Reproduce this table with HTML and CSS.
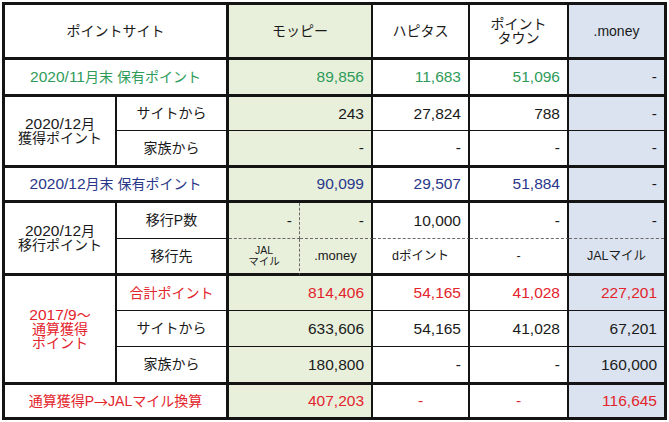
FILE: index.html
```html
<!DOCTYPE html>
<html lang="ja">
<head>
<meta charset="utf-8">
<title>ポイントサイト</title>
<link rel="stylesheet" href="styles.css">
</head>
<body>
<div class="sheet">
  <!-- header -->
  <div class="c s2 tr tb">ポイントサイト</div>
  <div class="c s2 mp tb">モッピー</div>
  <div class="c tb">ハピタス</div>
  <div class="c tb ml">ポイント<br>タウン</div>
  <div class="c tb mo nr">.money</div>

  <!-- 2020/11月末 -->
  <div class="c s2 tr tb g"><span class="d">2020/11</span>月末 保有ポイント</div>
  <div class="c s2 mp tb n g">89,856</div>
  <div class="c tb n g">11,683</div>
  <div class="c tb n g">51,096</div>
  <div class="c tb n mo nr">-</div>

  <!-- 2020/12月 獲得 -->
  <div class="c r2 tb ml"><span><span class="d">2020/12</span>月<br>獲得ポイント</span></div>
  <div class="c tr">サイトから</div>
  <div class="c s2 mp n">243</div>
  <div class="c n">27,824</div>
  <div class="c n">788</div>
  <div class="c n mo nr">-</div>

  <div class="c tr tb">家族から</div>
  <div class="c s2 mp tb n">-</div>
  <div class="c tb n">-</div>
  <div class="c tb n">-</div>
  <div class="c tb n mo nr">-</div>

  <!-- 2020/12月末 -->
  <div class="c s2 tr tb b"><span class="d">2020/12</span>月末 保有ポイント</div>
  <div class="c s2 mp tb n b">90,099</div>
  <div class="c tb n b">29,507</div>
  <div class="c tb n b">51,884</div>
  <div class="c tb n mo nr">-</div>

  <!-- 移行 -->
  <div class="c r2 tb ml"><span><span class="d">2020/12</span>月<br>移行ポイント</span></div>
  <div class="c tr">移行P数</div>
  <div class="c mp n db dr">-</div>
  <div class="c mp n db">-</div>
  <div class="c n db">10,000</div>
  <div class="c n db">-</div>
  <div class="c n db mo nr">-</div>

  <div class="c tr tb">移行先</div>
  <div class="c mp tb dr xs">JAL<br>マイル</div>
  <div class="c mp tb sm2">.money</div>
  <div class="c tb sm">dポイント</div>
  <div class="c tb sm">-</div>
  <div class="c tb mo nr sm">JALマイル</div>

  <!-- 通算 -->
  <div class="c r3 tb ml red"><span><span class="d">2017/9</span>〜<br>通算獲得<br>ポイント</span></div>
  <div class="c tr red">合計ポイント</div>
  <div class="c s2 mp n red">814,406</div>
  <div class="c n red">54,165</div>
  <div class="c n red">41,028</div>
  <div class="c n mo nr red">227,201</div>

  <div class="c tr">サイトから</div>
  <div class="c s2 mp n">633,606</div>
  <div class="c n">54,165</div>
  <div class="c n">41,028</div>
  <div class="c n mo nr">67,201</div>

  <div class="c tr tb">家族から</div>
  <div class="c s2 mp tb n">180,800</div>
  <div class="c tb n">-</div>
  <div class="c tb n">-</div>
  <div class="c tb n mo nr">160,000</div>

  <!-- 換算 -->
  <div class="c s2 tr nb red">通算獲得P<span class="ja">→</span>JALマイル換算</div>
  <div class="c s2 mp nb n red">407,203</div>
  <div class="c nb num red">-</div>
  <div class="c nb num red">-</div>
  <div class="c nb n mo nr red">116,645</div>
</div>
</body>
</html>
```

FILE: styles.css
```css
* {
  box-sizing: border-box;
}

html,
body {
  margin: 0;
  background: #ffffff;
}

body {
  padding: 2px;
  font-family: "Liberation Sans", "Noto Sans CJK JP", sans-serif;
  font-size: 14px;
  color: #1a1a1a;
}

.sheet {
  display: grid;
  width: fit-content;
  grid-template-columns: 112px 112px 71px 73px 97px 99px 95px;
  grid-template-rows: 55px 37px 34px 37px 35px 36px 37px 35px 36px 38px 32px;
  border: 3px solid #141414;
}

.c {
  display: flex;
  align-items: center;
  justify-content: center;
  text-align: center;
  white-space: nowrap;
  padding: 0 7px;
  line-height: 1.15;
  border-right: 2px solid #141414;
  border-bottom: 1px solid #141414;
}

.n,
.num {
  font-size: 15.5px;
}

.n {
  justify-content: flex-end;
  text-align: right;
}

.d {
  font-size: 15.5px;
}

.ja {
  font-family: "Noto Sans CJK JP", sans-serif;
}

.tb { border-bottom-width: 3px; }
.tr { border-right-width: 3px; }
.dr { border-right: 1px dashed #6a6a6a; }
.db { border-bottom: 1px dashed #6a6a6a; }
.nr { border-right: 0; }
.nb { border-bottom: 0; }

.s2 { grid-column: span 2; }
.r2 { grid-row: span 2; }
.r3 { grid-row: span 3; }

.mp { background: #e8f0dc; }
.mo { background: #dae3ef; }

.g { color: #2e9b59; }
.b { color: #29378a; }
.red { color: #e3242c; }

.ml { line-height: 14px; }
.sm { font-size: 12.5px; }
.sm2 { font-size: 13px; }
.xs {
  font-size: 10.5px;
  line-height: 11px;
  padding: 0;
}
```
